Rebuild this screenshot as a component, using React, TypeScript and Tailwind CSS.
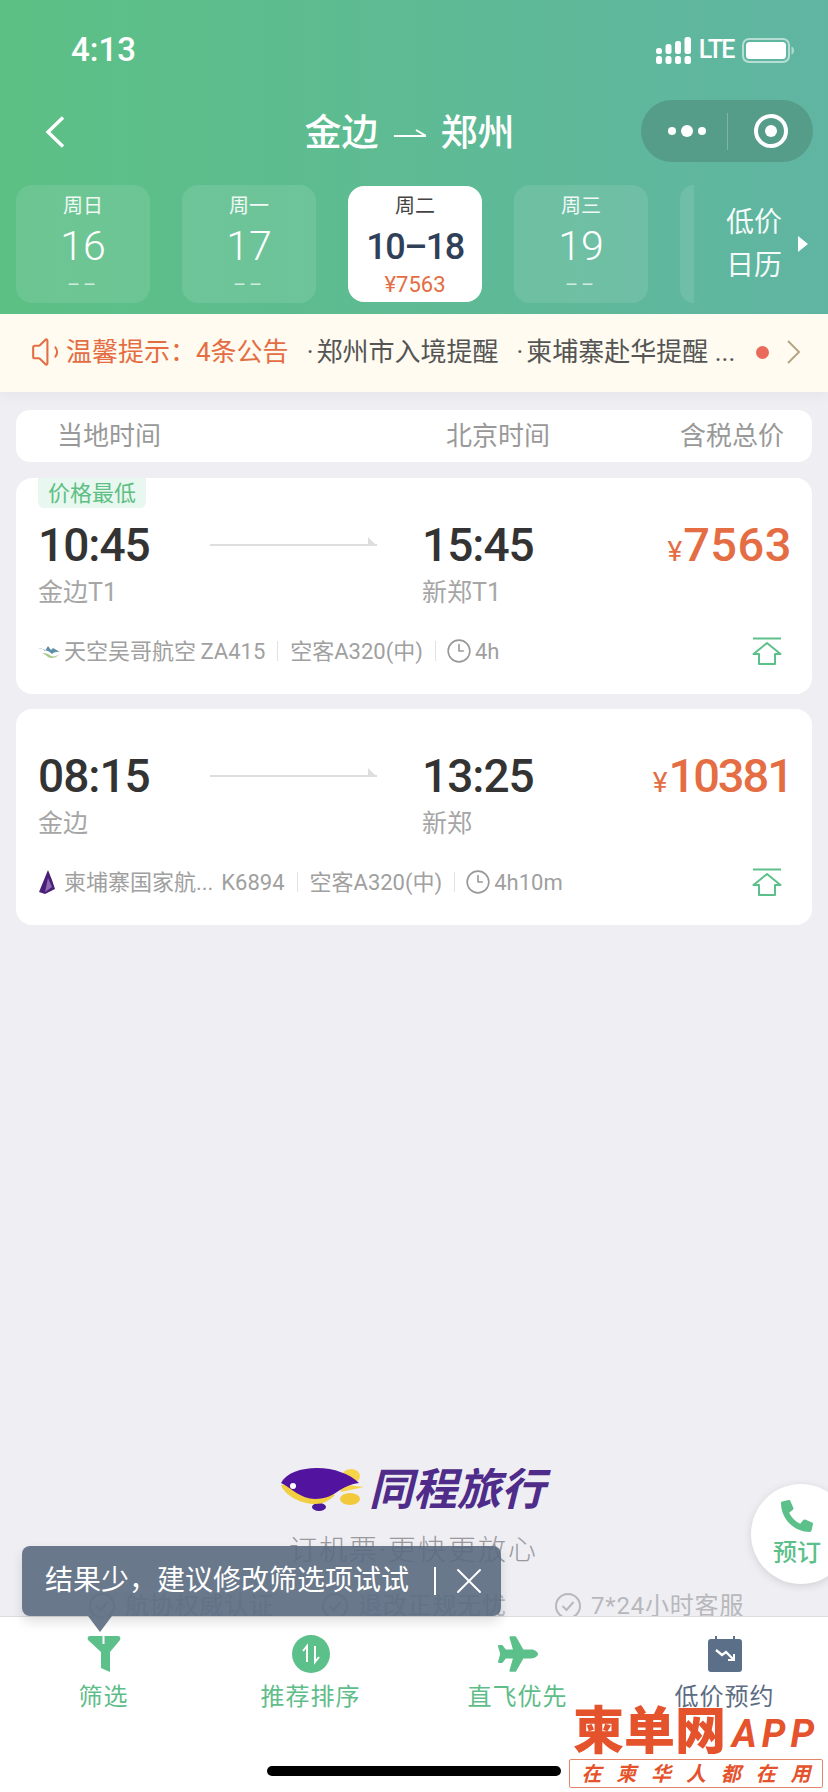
import { Clock3, Volume1, X } from "lucide-react";
import { FaPhoneAlt, FaPlane } from "react-icons/fa";

const days = [
  { week: "周日", day: "16" },
  { week: "周一", day: "17" },
  { week: "周二", day: "10–18", price: "¥7563", active: true },
  { week: "周三", day: "19" },
];

const flights = [
  {
    dep: "10:45",
    depPort: "金边T1",
    arr: "15:45",
    arrPort: "新郑T1",
    price: "7563",
    priceClass: "tracking-[0.5px]",
    airline: "天空吴哥航空\u2009ZA415",
    duration: "4h",
    badge: "价格最低",
    logo: "sky",
  },
  {
    dep: "08:15",
    depPort: "金边",
    arr: "13:25",
    arrPort: "新郑",
    price: "10381",
    priceClass: "tracking-[-2px]",
    airline: "柬埔寨国家航...\u2005\u200aK6894",
    duration: "4h10m",
    logo: "cambodia",
  },
];

const promises = ["航协权威认证", "退改正规无忧", "7*24小时客服"];

function Signal() {
  return (
    <svg width="35" height="27" viewBox="0 0 35 27" fill="white">
      <rect x="0" y="11" width="6" height="6" rx="2.5" />
      <rect x="0" y="19" width="6" height="8" rx="2.5" />
      <rect x="9.500" y="7" width="6" height="10" rx="2.500" />
      <rect x="9.500" y="19" width="6" height="8" rx="2.500" />
      <rect x="19" y="4" width="6" height="13" rx="2.500" />
      <rect x="19" y="19" width="6" height="8" rx="2.500" />
      <rect x="28.500" y="0" width="6.500" height="17" rx="2.500" />
      <rect x="28.500" y="19" width="6.500" height="8" rx="2.500" />
    </svg>
  );
}

function Battery() {
  return (
    <svg width="52" height="25" viewBox="0 0 52 25">
      <rect x="1" y="1" width="46" height="23" rx="6" fill="none" stroke="white" strokeOpacity="0.55" strokeWidth="2" />
      <rect x="4" y="4" width="40" height="17" rx="3.5" fill="white" />
      <path d="M49.5 8.500c1.600.6 2.500 2 2.500 4s-.9 3.400-2.500 4z" fill="white" fillOpacity="0.5" />
    </svg>
  );
}

function UpIcon() {
  return (
    <svg width="30" height="28" viewBox="0 0 30 28" fill="none" stroke="#5cc08a" strokeWidth="2">
      <path d="M1 1.500h28" />
      <path d="M15 6 1.500 17H7v10h16V17h5.500z" strokeLinejoin="round" />
    </svg>
  );
}

function AirlineLogo({ kind }: { kind: string }) {
  if (kind === "sky") {
    return (
      <svg width="22" height="14" viewBox="0 0 22 14">
        <path d="M0 4c3 0 5 1 7 3L10 2l3 4 2-2 7 4c-4-.5-6 .5-8 2-3-3-6-4-14-6z" fill="#5f8fa8" />
        <path d="M4 9c4 0 7 1 9 3 3 1 6 0 8-2-2 4-8 5-11 3-2-2-4-3-6-4z" fill="#a8c98a" />
      </svg>
    );
  }
  return (
    <svg width="18" height="24" viewBox="0 0 18 24">
      <path d="M10 0 1 22l6 2 10-5-3-9z" fill="#4a1f78" />
      <path d="M10 8 7 22l7-5z" fill="#8c6bb0" />
    </svg>
  );
}

function BlimpLogo() {
  return (
    <svg width="84" height="46" viewBox="0 0 84 46">
      <ellipse cx="70" cy="9" rx="9" ry="7" fill="#f7d54a" />
      <ellipse cx="69" cy="32" rx="10" ry="6" fill="#f2c93b" />
      <path d="M58 17 83 20 60 25z" fill="#f7d54a" />
      <ellipse cx="38" cy="40" rx="7" ry="4" fill="#4a1a9a" />
      <path d="M0 18c3 9 18 19 34 19 8 0 14-3 20-9L30 16z" fill="#f2cf40" />
      <path d="M0 16C5 6 20 1 36 1c17 0 33 6 42 15-8 1-14 4-19 7-7 5-14 9-25 9C20 32 10 21 0 16z" fill="#52149f" />
      <circle cx="12" cy="19" r="3" fill="white" />
    </svg>
  );
}

function CheckCircle() {
  return (
    <svg width="26" height="26" viewBox="0 0 26 26" fill="none" stroke="#b8b8bc" strokeWidth="2">
      <circle cx="13" cy="13" r="12" />
      <path d="m7.500 13 4 4 7-8" />
    </svg>
  );
}

function FlightCard({ flight }: { flight: (typeof flights)[number] }) {
  return (
    <div className="relative h-[216px] rounded-[16px] bg-white px-[22px] pt-[44px]">
      {flight.badge && (
        <span className="absolute top-0 left-[22px] flex h-[30px] w-[108px] items-center justify-center rounded-b-[6px] bg-[#e8f7ef] text-[22px] text-[#5dbf84]">
          {flight.badge}
        </span>
      )}
      <div className="flex h-[46px] items-center">
        <span className="w-[172px] text-[46px] leading-[46px] font-medium tracking-[-1px] text-[#333]">{flight.dep}</span>
        <span className="relative h-[2px] w-[167px] bg-[#dedede]">
          <span className="absolute right-0 bottom-0 h-0 w-0 border-t-[9px] border-l-[9px] border-t-transparent border-l-[#dedede]" />
        </span>
        <span className="ml-[45px] flex-1 text-[46px] leading-[46px] font-medium tracking-[-1px] text-[#333]">{flight.arr}</span>
        <span className="-mr-[2px] flex items-baseline pt-[7px] font-medium text-[#e46d43]">
          <span className="mr-[1px] text-[28px] leading-[46px] font-normal">¥</span>
          <span className={`text-[47px] leading-[46px] ${flight.priceClass}`}>{flight.price}</span>
        </span>
      </div>
      <div className="mt-[6px] flex h-[38px] items-center text-[25px] text-[#a6a6a6]">
        <span className="w-[384px]">{flight.depPort}</span>
        <span>{flight.arrPort}</span>
      </div>
      <div className="mt-[23px] flex h-[32px] items-center text-[22px] whitespace-nowrap text-[#a0a0a0]">
        <span className="flex w-[26px] items-center">
          <AirlineLogo kind={flight.logo} />
        </span>
        <span>{flight.airline}</span>
        <span className="mx-[12px] h-[20px] w-px bg-[#e2e2e2]" />
        <span>空客A320(中)</span>
        <span className="mx-[12px] h-[20px] w-px bg-[#e2e2e2]" />
        <Clock3 size={26} strokeWidth={1.5} className="mr-[3px] -ml-[2px] text-[#999]" />
        <span>{flight.duration}</span>
        <span className="mr-[8px] ml-auto flex">
          <UpIcon />
        </span>
      </div>
    </div>
  );
}

function TabItem({ label, active, children }: { label: string; active?: boolean; children: React.ReactNode }) {
  return (
    <div className="flex flex-col items-center">
      <div className="flex h-[38px] items-center justify-center">{children}</div>
      <span className={`mt-[6px] text-[24px] leading-[36px] tracking-[1px] ${active ? "text-[#5fbd89]" : "text-[#5c6c82]"}`}>
        {label}
      </span>
    </div>
  );
}

export default function App() {
  return (
    <div className="relative flex h-[1792px] w-[828px] flex-col overflow-hidden bg-[#eeeef3] font-['Roboto','Noto_Sans_CJK_SC',sans-serif]">
      <header className="h-[314px] bg-gradient-to-r from-[#5cc084] to-[#60b5a2] text-white">
        <div className="flex h-[100px] items-center pr-[34px] pl-[71px]">
          <span className="text-[33px] font-medium">4:13</span>
          <div className="ml-auto flex items-center gap-[8px]">
            <Signal />
            <span className="text-[25px] font-medium tracking-[-1.5px]">LTE</span>
            <Battery />
          </div>
        </div>

        <div className="relative flex h-[62px] items-center justify-center">
          <svg width="20" height="32" viewBox="0 0 20 32" fill="none" stroke="white" strokeWidth="3.4" className="absolute top-[16px] left-[45px]">
            <path d="M18 1.500 3 16l15 14.500" />
          </svg>
          <div className="flex items-center pt-[5px] pr-[9px] text-[37px] font-medium">
            <span>金边</span>
            <svg width="32" height="10" viewBox="0 0 32 10" className="mx-[15px]" fill="none" stroke="white" strokeWidth="2">
              <path d="M0 7h32L22 1" />
            </svg>
            <span>郑州</span>
          </div>
          <div className="absolute right-[15px] flex h-[62px] w-[172px] items-center rounded-full bg-[#559d88]">
            <div className="flex w-[86px] items-center justify-center gap-[5px] pl-[6px]">
              <span className="size-[8px] rounded-full bg-white" />
              <span className="size-[12px] rounded-full bg-white" />
              <span className="size-[8px] rounded-full bg-white" />
            </div>
            <span className="h-[37px] w-px bg-white/25" />
            <div className="flex flex-1 items-center justify-center">
              <span className="flex size-[34px] items-center justify-center rounded-full border-[4px] border-white">
                <span className="size-[12px] rounded-full bg-white" />
              </span>
            </div>
          </div>
        </div>

        <div className="mt-[23px] flex h-[118px] pl-[16px]">
          <div className="flex gap-[32px]">
            {days.map((d) =>
              d.active ? (
                <div key={d.week} className="flex h-[116px] w-[134px] translate-y-px flex-col items-center rounded-[16px] bg-white">
                  <span className="mt-[6px] text-[20px] leading-[28px] text-[#444]">{d.week}</span>
                  <span className="mt-[5px] text-[36px] leading-[44px] font-medium tracking-[-1.5px] text-[#2f4058]">{d.day}</span>
                  <span className="mt-[3px] text-[22px] leading-[26px] text-[#e46d43]">{d.price}</span>
                </div>
              ) : (
                <div key={d.week} className="flex w-[134px] flex-col items-center rounded-[16px] bg-white/10">
                  <span className="mt-[7px] text-[20px] leading-[28px] text-white/90">{d.week}</span>
                  <span className="mt-[3px] text-[41px] leading-[46px] font-[350]">{d.day}</span>
                  <span className="mt-[3px] text-[20px] leading-[26px] tracking-[3px] text-white/70">––</span>
                </div>
              ),
            )}
          </div>
          <div className="ml-[32px] w-[14px] rounded-l-[16px] bg-white/10" />
          <div className="flex flex-1 items-center pl-[32px]">
            <div className="flex flex-col text-[28px] leading-[43px] text-white/95">
              <span>低价</span>
              <span>日历</span>
            </div>
            <span className="ml-[16px] h-0 w-0 border-y-[8px] border-l-[10px] border-y-transparent border-l-white" />
          </div>
        </div>
      </header>

      <div className="flex h-[78px] items-center bg-[#fffbf0] pr-[26px] pb-[2px] pl-[30px] text-[26px] whitespace-nowrap shadow-[0_6px_10px_rgba(0,0,0,0.03)]">
        <Volume1 size={38} strokeWidth={1.3} className="-mr-[2px] text-[#e46d43]" />
        <span className="text-[#e46d43]">{"温馨提示\uFF1A4条公告"}</span>
        <span className="ml-[18px] text-[#555]">
          <span className="mr-[3px]">·</span>郑州市入境提醒
        </span>
        <span className="ml-[18px] text-[#555]">
          <span className="mr-[3px]">·</span>柬埔寨赴华提醒 ...
        </span>
        <span className="ml-auto size-[13px] rounded-full bg-[#ea6a5b]" />
        <svg width="16" height="24" viewBox="0 0 16 24" fill="none" stroke="#b5a684" strokeWidth="2" className="ml-[17px]">
          <path d="m2 1 11 11L2 23" />
        </svg>
      </div>

      <main className="flex flex-1 flex-col gap-[15px] px-[16px] pt-[18px]">
        <div className="mb-[1px] flex h-[52px] items-center rounded-[14px] bg-white pl-[41px] text-[26px] text-[#999]">
          <span className="w-[389px]">当地时间</span>
          <span>北京时间</span>
          <span className="ml-auto pr-[28px]">含税总价</span>
        </div>
        {flights.map((f) => (
          <FlightCard key={f.dep} flight={f} />
        ))}
      </main>

      <section className="flex h-[148px] shrink-0 flex-col overflow-hidden">
        <div className="flex h-[44px] items-center pl-[281px]">
          <BlimpLogo />
          <span className="ml-[4px] text-[44px] leading-[44px] font-bold text-[#4f2c8a] italic">同程旅行</span>
        </div>
        <div className="mt-[19px] h-[40px] pl-[289px] text-[28px] leading-[40px] font-light tracking-[2px] whitespace-nowrap text-[#9a9a9e]">
          订机票·更快更放心
        </div>
        <div className="mt-[23px] flex h-[24px] items-center pl-[89px] text-[24px] tracking-[0.8px] whitespace-nowrap text-[#b8b8bc]">
          {promises.map((p) => (
            <div key={p} className="flex w-[233px] items-center gap-[10px]">
              <CheckCircle />
              <span>{p}</span>
            </div>
          ))}
        </div>
      </section>

      <nav className="grid h-[176px] shrink-0 grid-cols-4 border-t border-[#dcdcdc] bg-white pt-[18px]">
        <TabItem label="筛选" active>
          <svg width="34" height="36" viewBox="0 0 34 36">
            <path d="M3 0h12.500v8H17.500V0H31c2 0 3 2 2 4L23 16v20l-9-4V16L1 4C0 2 1 0 3 0z" fill="#5cc08a" />
          </svg>
        </TabItem>
        <TabItem label="推荐排序" active>
          <svg width="38" height="38" viewBox="0 0 38 38">
            <circle cx="19" cy="19" r="19" fill="#5cc08a" />
            <path d="M15 27V11l-4 5M23 11v16l4-5" fill="none" stroke="white" strokeWidth="2" />
          </svg>
        </TabItem>
        <TabItem label="直飞优先" active>
          <FaPlane size={40} color="#5cc08a" />
        </TabItem>
        <TabItem label="低价预约">
          <svg width="34" height="36" viewBox="0 0 34 36">
            <rect x="0" y="3" width="34" height="33" rx="3" fill="#5c6f88" />
            <path d="M8 0v4M26 0v4" stroke="#5c6f88" strokeWidth="2" />
            <path d="m8 14 6 5 4-3 7 7" fill="none" stroke="white" strokeWidth="2.4" />
            <path d="M26 18v6h-6" fill="none" stroke="white" strokeWidth="2" />
          </svg>
        </TabItem>
      </nav>

      {/* tip over the filter tab */}
      <div className="absolute top-[1546px] left-[22px] flex h-[70px] w-[479px] items-center rounded-[8px] bg-[#5a6a80]/90 pl-[23px] text-[28px] whitespace-nowrap text-white shadow-[0_6px_12px_rgba(0,0,0,0.12)]">
        <span>{"结果少\uFF0C建议修改筛选项试试"}</span>
        <span className="ml-[25px] h-[28px] w-[2px] bg-white" />
        <X size={44} strokeWidth={1.1} className="ml-[11px]" />
        <span className="absolute top-[70px] left-[66px] h-0 w-0 border-x-[12px] border-t-[16px] border-x-transparent border-t-[#5a6a80]/90" />
      </div>

      {/* floating booking button */}
      <div className="absolute top-[1484px] left-[751px] flex h-[100px] w-[100px] flex-col items-center rounded-full bg-white pr-[8px] shadow-[0_2px_8px_rgba(0,0,0,0.12)]">
        <FaPhoneAlt size={32} color="#5cc08a" className="mt-[16px]" />
        <span className="mt-[4px] text-[24px] leading-[34px] font-medium text-[#5cc08a]">预订</span>
      </div>

      {/* home indicator */}
      <div className="absolute top-[1766px] left-[267px] h-[10px] w-[294px] rounded-full bg-black" />

      {/* watermark */}
      <div className="absolute top-[1705px] left-[573px] flex h-[54px] items-center whitespace-nowrap text-[#e5532d]">
        <span className="text-[51px] leading-[54px] font-black">柬单网</span>
        <span className="ml-[6px] pt-[4px] text-[38px] font-bold tracking-[5px] italic">APP</span>
      </div>
      <div className="absolute top-[1759px] left-[569px] flex h-[29px] w-[254px] items-center justify-around rounded-[2px] border border-[#e5856b] bg-white px-[4px] text-[20px] font-bold text-[#e5532d] italic">
        {["在", "柬", "华", "人", "都", "在", "用"].map((c, i) => (
          <span key={i}>{c}</span>
        ))}
      </div>
    </div>
  );
}
